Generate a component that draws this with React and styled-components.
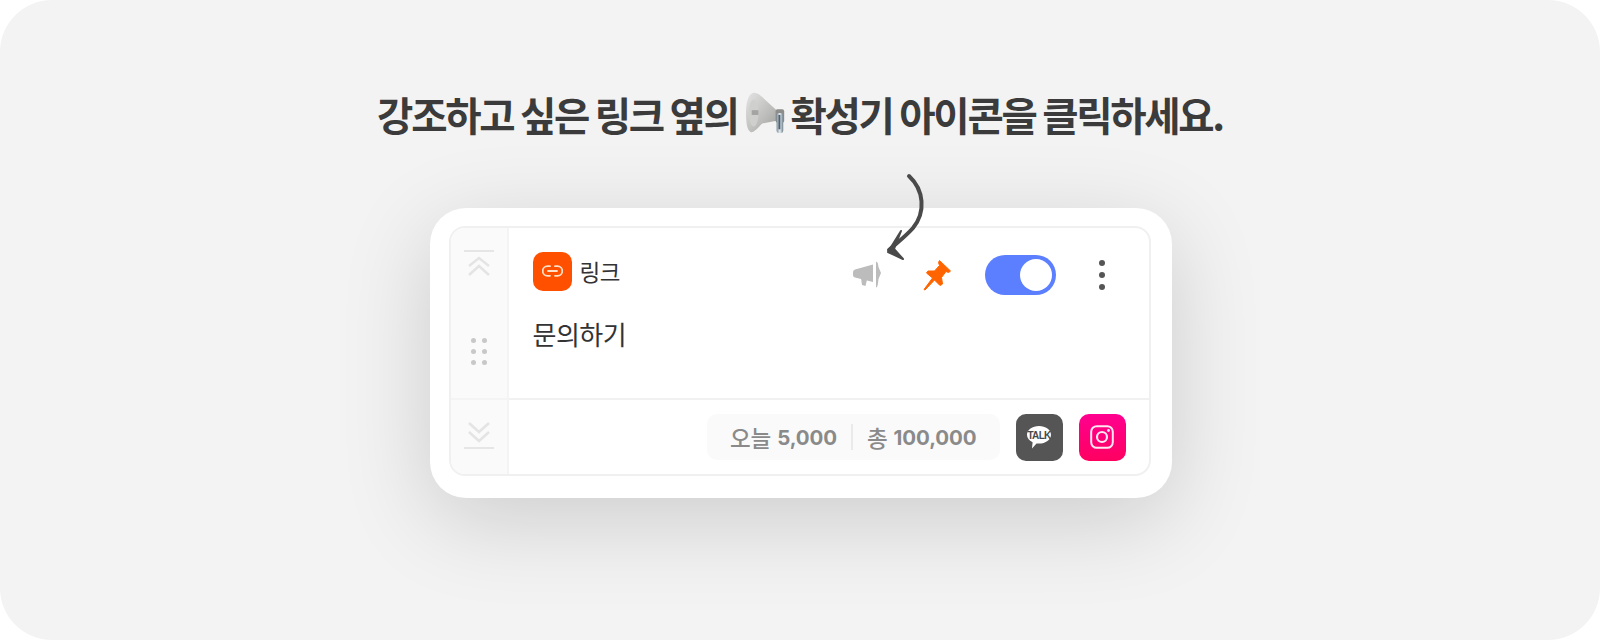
import React from 'react';
import styled, { createGlobalStyle } from 'styled-components';

const GlobalStyle = createGlobalStyle`
  html, body {
    margin: 0;
    padding: 0;
    background: #fff;
  }
  body {
    font-family: Inter, "Noto Sans CJK KR", "Noto Sans", sans-serif;
  }
`;

const Canvas = styled.div`
  width: 1600px;
  height: 640px;
  box-sizing: border-box;
  padding-top: 96px;
  background: #f3f3f3;
  border-radius: 52px;
  display: flex;
  flex-direction: column;
  align-items: center;
  overflow: hidden;
`;

const Title = styled.h1`
  margin: 0 0 76px;
  height: 36px;
  display: flex;
  align-items: center;
  font-family: "Noto Sans CJK KR", sans-serif;
  font-size: 39.5px;
  line-height: 36px;
  font-weight: 700;
  letter-spacing: -2.3px;
  color: #3b3b3b;
  white-space: pre;
`;

const Emoji = styled.svg`
  width: 42px;
  height: 46px;
  margin: 0 3px 0 8px;
  flex: none;
`;

const Card = styled.div`
  position: relative;
  width: 742px;
  height: 290px;
  box-sizing: border-box;
  margin-left: 1px;
  padding: 18px 21px 22px 19px;
  background: #fff;
  border-radius: 36px;
  box-shadow: 0 22px 90px rgba(0, 0, 0, 0.16);
`;

const Arrow = styled.svg`
  position: absolute;
  left: 451px;
  top: -34px;
  width: 50px;
  height: 90px;
  overflow: visible;
`;

const Panel = styled.div`
  height: 100%;
  display: grid;
  grid-template-columns: 58px 1fr;
  border: 2px solid #f0f0f0;
  border-radius: 16px;
  overflow: hidden;
  box-sizing: border-box;
`;

const Rail = styled.div`
  display: grid;
  grid-template-rows: 1fr 74px;
  background: #fafafa;
  border-right: 2px solid #f4f4f4;
`;

const RailTop = styled.div`
  display: flex;
  flex-direction: column;
  align-items: center;
  padding-top: 22px;
  gap: 58px;
  border-bottom: 2px solid #f4f4f4;
`;

const RailBottom = styled.div`
  display: flex;
  align-items: flex-start;
  justify-content: center;
  padding-top: 20px;
`;

const RailIcon = styled.svg`
  width: 32px;
  height: 30px;
  display: block;
`;

const Grip = styled.div`
  display: grid;
  grid-template-columns: repeat(2, 5px);
  gap: 6px 6px;
`;

const GripDot = styled.span`
  width: 5px;
  height: 5px;
  border-radius: 50%;
  background: #c8c8c8;
`;

const Main = styled.div`
  display: grid;
  grid-template-rows: 1fr 74px;
`;

const Body = styled.div`
  padding: 23px 24px 0 24px;
  border-bottom: 2px solid #f1f1f1;
`;

const Header = styled.div`
  display: flex;
  align-items: center;
  height: 40px;
`;

const TypeIcon = styled.div`
  width: 39px;
  height: 39px;
  border-radius: 10px;
  background: #ff5000;
  display: flex;
  align-items: center;
  justify-content: center;
`;

const TypeLabel = styled.span`
  margin-left: 8px;
  font-family: "Noto Sans CJK KR", sans-serif;
  font-size: 22.5px;
  color: #333;
  letter-spacing: -0.4px;
`;

const Actions = styled.div`
  margin-left: auto;
  padding-top: 8px;
  display: flex;
  align-items: center;
`;

const ActionIcon = styled.svg`
  display: block;
`;

const Spacer = styled.div`
  width: 41px;
`;

const Toggle = styled.div`
  width: 71px;
  height: 40px;
  margin-left: 34px;
  border-radius: 20px;
  background: #5c7fff;
  display: flex;
  align-items: center;
  justify-content: flex-end;
  padding: 0 4px;
  box-sizing: border-box;
`;

const Knob = styled.span`
  width: 32px;
  height: 32px;
  border-radius: 50%;
  background: #fff;
`;

const Kebab = styled.div`
  margin-left: 43px;
  margin-right: 20px;
  display: flex;
  flex-direction: column;
  gap: 6px;
`;

const KebabDot = styled.span`
  width: 6px;
  height: 6px;
  border-radius: 50%;
  background: #555;
`;

const LinkTitle = styled.div`
  margin-top: 25px;
  font-family: "Noto Sans CJK KR", sans-serif;
  font-size: 26px;
  line-height: 36px;
  color: #333;
  letter-spacing: -0.5px;
`;

const Footer = styled.div`
  display: flex;
  align-items: center;
  justify-content: flex-end;
  padding: 0 23px 0 0;
  gap: 16px;
`;

const Stats = styled.div`
  height: 46px;
  padding: 0 23px;
  border-radius: 10px;
  background: #fafafa;
  display: flex;
  align-items: center;
  font-size: 20.5px;
  font-weight: 700;
  color: #8a8a8a;
  font-family: Inter, "Noto Sans CJK KR", sans-serif;
  letter-spacing: -0.1px;
`;

const StatLabel = styled.span`
  font-family: "Noto Sans CJK KR", sans-serif;
  font-size: 22.5px;
  font-weight: 500;
  margin-right: 6px;
`;

const StatDivider = styled.span`
  width: 2px;
  height: 26px;
  margin: 0 14px;
  background: #eaeaea;
`;

const Social = styled.div`
  width: 47px;
  height: 47px;
  border-radius: 10px;
  background: ${({ $bg }) => $bg};
  display: flex;
  align-items: center;
  justify-content: center;
`;

const TalkWrap = styled.div`
  position: relative;
  width: 26px;
  height: 24px;
  display: flex;
  justify-content: center;
`;

const TalkBubble = styled.svg`
  position: absolute;
  inset: 0;
  width: 26px;
  height: 24px;
`;

const TalkText = styled.span`
  position: relative;
  font-family: "Liberation Sans", sans-serif;
  font-size: 10px;
  line-height: 21px;
  font-weight: 700;
  letter-spacing: -0.7px;
  color: #4a4a4a;
`;

const MegaphoneEmoji = () => (
  <Emoji viewBox="0 0 44 46">
    <defs>
      <linearGradient id="horn" x1="0" y1="0" x2="1" y2="1">
        <stop offset="0" stopColor="#e4e4e4" />
        <stop offset="0.6" stopColor="#bcbcba" />
        <stop offset="1" stopColor="#9a9a98" />
      </linearGradient>
      <linearGradient id="clip" x1="0" y1="0" x2="1" y2="0">
        <stop offset="0" stopColor="#7d8f9c" />
        <stop offset="0.5" stopColor="#e4edf2" />
        <stop offset="1" stopColor="#6f7e88" />
      </linearGradient>
    </defs>
    <path d="M7 1 C11 0 15 3 20 8 L34 21 L32 30 L17 33 C12 38 8 43 5 42 C1 40 0 32 0 22 C0 12 2 3 7 1 Z" fill="url(#horn)" />
    <ellipse cx="8" cy="22" rx="5" ry="14" fill="#cfcfcd" />
    <path d="M6 19 L13 19 L13 24 L6 24 Z" fill="#a4a4a2" />
    <rect x="31" y="18" width="9" height="14" rx="2" fill="#8d8d8b" />
    <rect x="32" y="22" width="7" height="21" rx="2.5" fill="url(#clip)" />
    <rect x="34" y="24" width="2" height="15" fill="#4f6070" />
  </Emoji>
);

const MegaphoneIcon = () => (
  <ActionIcon width="29" height="28" viewBox="0 0 29 28">
    <path d="M2 8.5 L20 3.5 L20 21 L2 16.5 Q0 16 0 14 L0 11 Q0 9 2 8.5 Z" fill="#bcbcbc" />
    <path d="M8 17 L14 18.5 L12.5 25 L9 24 Z" fill="#bcbcbc" />
    <path d="M23 0.5 C25 1 25 3 25.5 6 L28 12 L25.5 18 C25 22 25 26 23 26.5 Z" fill="#bcbcbc" />
  </ActionIcon>
);

const PinIcon = () => (
  <ActionIcon width="28" height="32" viewBox="0 0 28 32">
    <path d="M16.5 1.5 L27.5 12 L25.5 13.5 L23 12.5 L18.5 18.5 L19.5 25 L17 26.5 L11.5 21 L2 31 L1 30.5 L9.5 19 L3.5 14 L5 12 L11.5 12 L16.5 6.5 L15.5 3.5 Z" fill="#ff6400" stroke="#ff6400" strokeWidth="1" strokeLinejoin="round" />
  </ActionIcon>
);

const App = () => (
  <>
    <GlobalStyle />
    <Canvas>
      <Title>
        강조하고 싶은 링크 옆의<MegaphoneEmoji />확성기 아이콘을 클릭하세요.
      </Title>
      <Card>
        <Arrow viewBox="0 0 50 90">
          <path d="M28 2 C43 16 45 38 32 54 C25 62 17 68 8 76" fill="none" stroke="#4a4a4a" strokeWidth="4" strokeLinecap="round" />
          <path d="M20 57 L7 78 L22 85 L13 75 Z" fill="#4a4a4a" stroke="#4a4a4a" strokeWidth="2" strokeLinejoin="round" />
        </Arrow>
        <Panel>
          <Rail>
            <RailTop>
              <RailIcon viewBox="0 0 32 30">
                <path d="M1 1 H31" stroke="#e6e6e6" strokeWidth="2" fill="none" />
                <path d="M6 16 L16 8 L26 16 M6 25 L16 16 L26 25" stroke="#e4e4e4" strokeWidth="2.5" fill="none" />
              </RailIcon>
              <Grip>
                {[0, 1, 2, 3, 4, 5].map((i) => <GripDot key={i} />)}
              </Grip>
            </RailTop>
            <RailBottom>
              <RailIcon viewBox="0 0 32 30">
                <path d="M6 3 L16 12 L26 3 M6 12 L16 21 L26 12" stroke="#e4e4e4" strokeWidth="2.5" fill="none" />
                <path d="M1 28 H31" stroke="#e6e6e6" strokeWidth="2" fill="none" />
              </RailIcon>
            </RailBottom>
          </Rail>
          <Main>
            <Body>
              <Header>
                <TypeIcon>
                  <svg width="21" height="12" viewBox="0 0 21 12" fill="none">
                    <path d="M8 1.2 H5.5 a4.8 4.8 0 0 0 0 9.6 H8 M13 1.2 H15.5 a4.8 4.8 0 0 1 0 9.6 H13 M6 6 H15" stroke="#ffe0c8" strokeWidth="1.8" strokeLinecap="round" />
                  </svg>
                </TypeIcon>
                <TypeLabel>링크</TypeLabel>
                <Actions>
                  <MegaphoneIcon />
                  <Spacer />
                  <PinIcon />
                  <Toggle><Knob /></Toggle>
                  <Kebab>
                    <KebabDot />
                    <KebabDot />
                    <KebabDot />
                  </Kebab>
                </Actions>
              </Header>
              <LinkTitle>문의하기</LinkTitle>
            </Body>
            <Footer>
              <Stats>
                <StatLabel>오늘</StatLabel>5,000
                <StatDivider />
                <StatLabel>총</StatLabel>100,000
              </Stats>
              <Social $bg="#555555">
                <TalkWrap>
                  <TalkBubble viewBox="0 0 26 24">
                    <path d="M13 1 C19.6 1 25 4.8 25 9.8 C25 14.8 19.6 18.6 13 18.6 L10.5 18.4 L6 23.5 L6.6 17.2 C3 15.5 1 12.9 1 9.8 C1 4.8 6.4 1 13 1 Z" fill="#fff" />
                  </TalkBubble>
                  <TalkText>TALK</TalkText>
                </TalkWrap>
              </Social>
              <Social $bg="linear-gradient(180deg, #ff0090 0%, #ff0060 100%)">
                <svg width="24" height="24" viewBox="0 0 24 24" fill="none">
                  <rect x="1.2" y="1.2" width="21.6" height="21.6" rx="5.5" stroke="#ffe6f2" strokeWidth="2" />
                  <circle cx="12" cy="12" r="5" stroke="#ffe6f2" strokeWidth="2.2" />
                  <circle cx="18.5" cy="5.5" r="1.4" fill="#ffe6f2" />
                </svg>
              </Social>
            </Footer>
          </Main>
        </Panel>
      </Card>
    </Canvas>
  </>
);

export default App;
